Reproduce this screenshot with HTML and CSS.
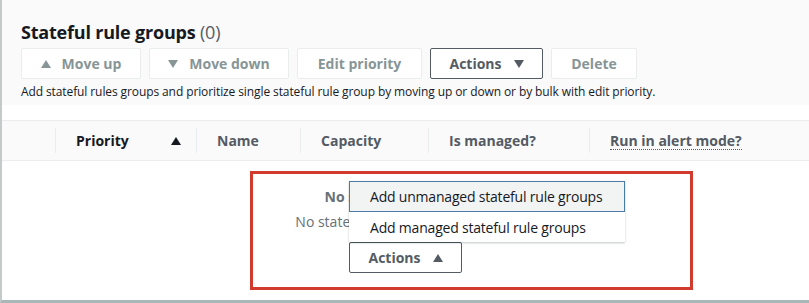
FILE: index.html
```html
<!DOCTYPE html>
<html lang="en">
<head>
    <meta charset="UTF-8">
    <meta name="viewport" content="width=device-width, initial-scale=1.0">
    <title>Stateful rule groups</title>
    <link rel="stylesheet" href="styles.css">
</head>
<body>
    <div class="panel">
        <div class="panel-header">
            <h2 class="title">Stateful rule groups <span class="count">(0)</span></h2>
            <div class="toolbar">
                <button class="btn disabled w-up">
                    <svg class="caret" width="10" height="8" viewBox="0 0 10 8"><path d="M5 0 L10 8 L0 8 Z" fill="currentColor"/></svg>Move up
                </button>
                <button class="btn disabled w-down">
                    <svg class="caret" width="10" height="8" viewBox="0 0 10 8"><path d="M0 0 L10 0 L5 8 Z" fill="currentColor"/></svg>Move down
                </button>
                <button class="btn disabled w-edit">Edit priority</button>
                <button class="btn w-actions">Actions
                    <svg class="caret after" width="10" height="8" viewBox="0 0 10 8"><path d="M0 0 L10 0 L5 8 Z" fill="currentColor"/></svg>
                </button>
                <button class="btn disabled w-delete">Delete</button>
            </div>
            <p class="description">Add stateful rules groups and prioritize single stateful rule group by moving up or down or by bulk with edit priority.</p>
        </div>

        <div class="table-head">
            <div class="col col-select"></div>
            <div class="col col-priority sorted">Priority
                <svg class="sort" width="10" height="8" viewBox="0 0 10 8"><path d="M5 0 L10 8 L0 8 Z" fill="currentColor"/></svg>
            </div>
            <div class="col col-name">Name</div>
            <div class="col col-capacity">Capacity</div>
            <div class="col col-managed">Is managed?</div>
            <div class="col col-alert"><span class="dotted">Run in alert mode?</span></div>
        </div>

        <div class="empty">
            <div class="empty-title">No stateful rule groups</div>
            <div class="empty-text">No stateful rule groups to display.</div>
            <div class="dropdown">
                <ul class="menu">
                    <li class="menu-item highlighted">Add unmanaged stateful rule groups</li>
                    <li class="menu-item">Add managed stateful rule groups</li>
                </ul>
                <button class="btn w-actions">Actions
                    <svg class="caret after" width="10" height="8" viewBox="0 0 10 8"><path d="M5 0 L10 8 L0 8 Z" fill="currentColor"/></svg>
                </button>
            </div>
            <div class="highlight-box"></div>
        </div>
    </div>
</body>
</html>
```

FILE: styles.css
```css
body {
    margin: 0;
    font-family: 'Open Sans', 'Noto Sans', sans-serif;
    background-color: #ffffff;
    color: #16191f;
}

.panel {
    width: 807px;
    height: 300px;
    border-left: 2px solid #c4c9ca;
    border-bottom: 3px solid #aab7b8;
    background-color: #ffffff;
    overflow: hidden;
}

.panel-header {
    background-color: #fafafa;
    padding: 19px 0 0 19px;
    height: 105px;
    box-sizing: border-box;
}

.title {
    margin: 0;
    font-size: 18px;
    font-weight: 700;
    line-height: 26px;
    color: #16191f;
    letter-spacing: -0.2px;
}

.count {
    font-weight: 400;
    color: #545b64;
}

.toolbar {
    display: flex;
    gap: 8px;
    margin-top: 3px;
}

.btn {
    height: 31px;
    box-sizing: border-box;
    background-color: #ffffff;
    border: 1px solid #545b64;
    border-radius: 2px;
    font-family: inherit;
    font-size: 14px;
    font-weight: 700;
    color: #545b64;
    padding: 0;
    display: flex;
    align-items: center;
    justify-content: center;
}

.btn.disabled {
    border-color: #eaeded;
    color: #879596;
}

.w-up { width: 120px; }
.w-down { width: 140px; }
.w-edit { width: 125px; }
.w-actions { width: 113px; }
.w-delete { width: 86px; }

.caret {
    margin-right: 11px;
}

.caret.after {
    margin-right: 0;
    margin-left: 12px;
}

.description {
    margin: 5px 0 0;
    font-size: 12px;
    line-height: 16px;
    color: #16191f;
    letter-spacing: -0.1px;
}

.table-head {
    display: flex;
    align-items: center;
    height: 41px;
    margin-top: 15px;
    background-color: #fafafa;
    border-top: 1px solid #eaeded;
    border-bottom: 1px solid #eaeded;
    box-sizing: border-box;
    font-size: 14px;
    font-weight: 700;
    color: #545b64;
}

.col {
    height: 25px;
    display: flex;
    align-items: center;
    padding-left: 20px;
    box-sizing: border-box;
    border-left: 1px solid #eaeded;
}

.col-select { width: 53px; border-left: none; padding: 0; }
.col-priority { width: 141px; color: #16191f; }
.col-name { width: 104px; }
.col-capacity { width: 128px; }
.col-managed { width: 161px; }
.col-alert { flex: 1; }

.sort {
    margin-left: auto;
    margin-right: 15px;
}

.dotted {
    border-bottom: 1px dotted #545b64;
    line-height: 17px;
}

.empty {
    position: relative;
    height: 139px;
    display: flex;
    flex-direction: column;
    align-items: center;
    padding-top: 26px;
    box-sizing: border-box;
    font-size: 14px;
    color: #687078;
}

.empty-title {
    font-weight: 700;
    line-height: 20px;
}

.empty-text {
    line-height: 20px;
    margin-top: 5px;
}

.dropdown {
    position: relative;
    margin-top: 10px;
}

.menu {
    position: absolute;
    left: 0;
    bottom: 100%;
    width: 276px;
    margin: 0;
    padding: 0;
    list-style: none;
    background-color: #ffffff;
    box-shadow: 0 1px 2px rgba(0, 22, 22, 0.25);
}

.menu-item {
    height: 30px;
    padding-left: 20px;
    display: flex;
    align-items: center;
    box-sizing: border-box;
    color: #16191f;
    font-size: 14px;
    letter-spacing: -0.2px;
    border: 1px solid transparent;
}

.menu-item.highlighted {
    background-color: #f2f3f3;
    border-color: #4a7ba6;
    height: 31px;
}

.highlight-box {
    position: absolute;
    left: 248px;
    top: 10px;
    width: 443px;
    height: 119px;
    border: 3px solid #d13b2e;
    box-sizing: border-box;
}
```
